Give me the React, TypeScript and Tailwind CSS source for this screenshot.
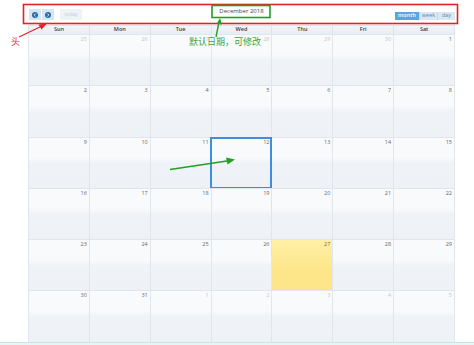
import React from 'react';

const days = ['Sun', 'Mon', 'Tue', 'Wed', 'Thu', 'Fri', 'Sat'];

// six weeks of December 2018, other = day from another month
const weeks: { d: number; other?: boolean }[][] = [
  [{ d: 25, other: true }, { d: 26, other: true }, { d: 27, other: true }, { d: 28, other: true }, { d: 29, other: true }, { d: 30, other: true }, { d: 1 }],
  [2, 3, 4, 5, 6, 7, 8].map((d) => ({ d })),
  [9, 10, 11, 12, 13, 14, 15].map((d) => ({ d })),
  [16, 17, 18, 19, 20, 21, 22].map((d) => ({ d })),
  [23, 24, 25, 26, 27, 28, 29].map((d) => ({ d })),
  [{ d: 30 }, { d: 31 }, { d: 1, other: true }, { d: 2, other: true }, { d: 3, other: true }, { d: 4, other: true }, { d: 5, other: true }],
];

function NavButton({ dir }: { dir: 'left' | 'right' }) {
  return (
    <div className="w-[12px] h-[11px] bg-[#d5e5f3] flex items-center justify-center">
      <svg width="6" height="6" viewBox="0 0 6 6">
        <circle cx="3" cy="3" r="3" fill="#2d6aa3" />
        {dir === 'left' ? (
          <path d="M3.6 1.6 L2.2 3 L3.6 4.4" stroke="#fff" strokeWidth="0.9" fill="none" />
        ) : (
          <path d="M2.4 1.6 L3.8 3 L2.4 4.4" stroke="#fff" strokeWidth="0.9" fill="none" />
        )}
      </svg>
    </div>
  );
}

export default function App() {
  return (
    <div
      className="relative w-[474px] h-[345px] overflow-hidden bg-white flex flex-col"
      style={{ fontFamily: '"Open Sans", "Liberation Sans", sans-serif' }}
    >
      <div className="ml-[28px] w-[427px] flex flex-col">
        {/* toolbar */}
        <div className="h-[25px] grid grid-cols-[1fr_auto_1fr] items-start">
          <div className="flex items-center mt-[9px] ml-[1px]">
            <NavButton dir="left" />
            <div className="w-[1px]" />
            <NavButton dir="right" />
            <div className="ml-[6px] w-[22px] h-[11px] bg-[#eef3f8] text-[#c3ccd6] text-[5px] flex items-center justify-center">
              today
            </div>
          </div>
          <div className="mt-[8px] text-[6px] leading-none text-[#444]">December 2018</div>
          <div className="flex justify-self-end mt-[12px] h-[7.5px] text-[5.5px] leading-none">
            <div className="w-[24px] bg-[#56a8e0] text-white flex items-center justify-center font-semibold">month</div>
            <div className="w-[18px] bg-[#dbe8f4] text-[#5a86b0] flex items-center justify-center border-l border-[#c5d8ea]">week</div>
            <div className="w-[18px] bg-[#dbe8f4] text-[#5a86b0] flex items-center justify-center border-l border-[#c5d8ea]">day</div>
          </div>
        </div>

        {/* day names */}
        <div className="grid grid-cols-7 h-[9px] border-t border-l border-[#dce3ea] bg-[linear-gradient(to_bottom,#f2f6fa,#e6edf4)]">
          {days.map((d) => (
            <div key={d} className="border-r border-[#dce3ea] text-[5.5px] font-semibold text-[#3a3a3a] flex items-center justify-center leading-none">
              {d}
            </div>
          ))}
        </div>

        {/* weeks */}
        <div className="border-l border-[#e1e6ec]">
          {weeks.map((w, i) => (
            <div key={i} className="grid grid-cols-7 h-[51.3px]">
              {w.map((c, j) => {
                const today = i === 4 && j === 4;
                const selected = i === 2 && j === 3;
                return (
                  <div
                    key={j}
                    className={
                      'relative border-r border-t border-[#e1e6ec] ' +
                      (today
                        ? 'bg-[linear-gradient(to_bottom,#fff0a6,#fde68a_60%,#fde68a)]'
                        : 'bg-[linear-gradient(to_bottom,#f9fafc_0%,#f9fafc_38%,#eff2f6_52%,#eef1f5_100%)]')
                    }
                  >
                    <div
                      className={
                        'text-right pr-[2px] pt-[2px] text-[5.5px] leading-none ' +
                        (c.other ? 'text-[#c4c8cc]' : 'text-[#666]')
                      }
                    >
                      {c.d}
                    </div>
                    {selected && (
                      <div className="absolute -left-[2px] -top-[1px] w-[62px] h-[52px] border-2 border-[#3d8ee0]" />
                    )}
                  </div>
                );
              })}
            </div>
          ))}
        </div>
      </div>

      {/* bottom strip */}
      <div className="flex-1 border-t border-[#c6e6e8] bg-[#e6f6f6]" />

      {/* annotations */}
      <svg className="absolute left-0 top-0 pointer-events-none" width="474" height="345" viewBox="0 0 474 345">
        <rect x="23.5" y="4.5" width="434" height="19" fill="none" stroke="#e02424" strokeWidth="1.6" />
        <rect x="212" y="5.5" width="58" height="12" fill="none" stroke="#22a022" strokeWidth="1.6" />
        {/* red arrow */}
        <line x1="19" y1="37" x2="42" y2="26" stroke="#e02424" strokeWidth="1.3" />
        <polygon points="47,23.5 38.5,24.5 41.5,29.5" fill="#e02424" />
        {/* green up arrow */}
        <line x1="216" y1="37" x2="219" y2="22" stroke="#22a022" strokeWidth="1.4" />
        <polygon points="220,18 216.5,24 222,24.5" fill="#22a022" />
        {/* green arrow into cell */}
        <line x1="170" y1="169.5" x2="227" y2="161" stroke="#22a022" strokeWidth="1.5" />
        <polygon points="235,159.5 226,157.5 227.5,164.5" fill="#22a022" />
      </svg>

      <div
        className="absolute left-[189px] top-[37px] text-[9px] leading-none text-[#3aa53a]"
        style={{ fontFamily: '"Noto Sans CJK SC", sans-serif' }}
      >
        默认日期，可修改
      </div>
      <div
        className="absolute left-[11px] top-[37px] text-[9px] leading-none text-[#e23030]"
        style={{ fontFamily: '"Noto Sans CJK SC", sans-serif' }}
      >
        头
      </div>
    </div>
  );
}
